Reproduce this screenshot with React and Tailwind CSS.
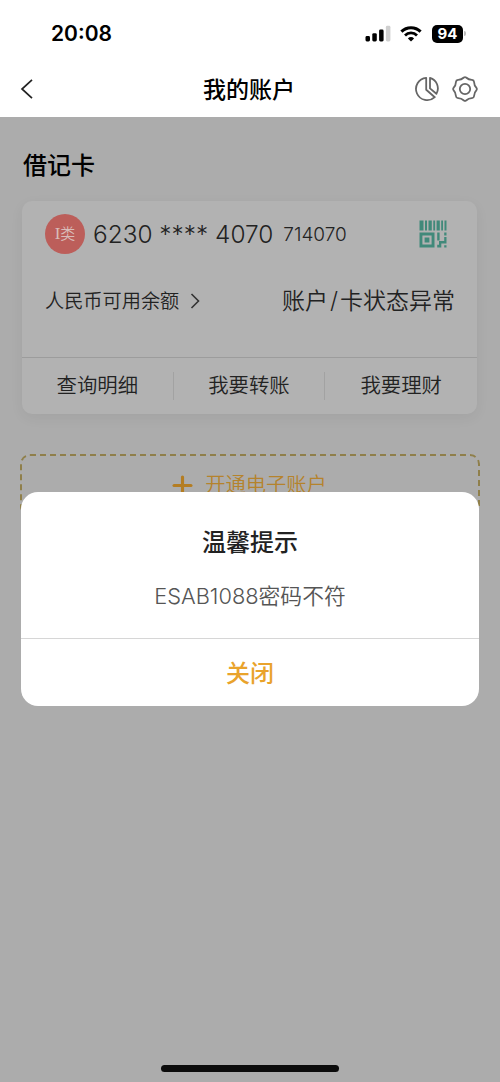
import { Plus } from 'lucide-react';

const actions = ['查询明细', '我要转账', '我要理财'];

const StatusBar = () => (
    <div className="flex h-[60px] items-center justify-between pt-[7px] pl-[51px] pr-[34px]">
        <span className="text-[21px] leading-none font-semibold text-black">20:08</span>
        <div className="flex items-center">
            <svg className="mr-[9px] h-[17px] w-[26px]" viewBox="0 0 26 17">
                <rect x="0.5" y="11" width="4.5" height="5.5" rx="1.4" />
                <rect x="7.3" y="8.2" width="4.5" height="8.3" rx="1.4" />
                <rect x="14.1" y="4.5" width="4.5" height="12" rx="1.4" />
                <rect x="20.9" y="0.8" width="4.5" height="15.7" rx="1.4" fill="#cfcfcf" />
            </svg>
            <svg className="mr-[10px] h-[16px] w-[22px]" viewBox="0 0 22 16" fill="none" stroke="black">
                <path d="M1.4 5.6a13.6 13.6 0 0 1 19.2 0" strokeWidth="3" />
                <path d="M5 9.4a8.5 8.5 0 0 1 12 0" strokeWidth="2.8" />
                <path d="M11 15.6l3.1-3.2a4.4 4.4 0 0 0-6.2 0z" fill="black" stroke="none" />
            </svg>
            <div className="flex h-[18px] w-[31px] items-center justify-center rounded-[5px] bg-black text-[15px] leading-none font-bold text-white">
                94
            </div>
            <div className="ml-px h-[5px] w-[2px] rounded-r-full bg-[#bbbbbb]"></div>
        </div>
    </div>
);

const NavBar = () => (
    <div className="grid h-[57px] grid-cols-3 items-center pr-[22px] pl-[20px]">
        <svg className="h-[22px] w-[14px]" viewBox="0 0 14 22" fill="none" stroke="#222222" strokeWidth="1.7">
            <path d="M12 1.8L2 11l10 9.2" />
        </svg>
        <h1 className="pt-[3px] text-center text-[23px] leading-none font-medium text-black">我的账户</h1>
        <div className="flex items-center justify-end gap-[12px]">
            <svg className="h-[26px] w-[26px]" viewBox="0 0 26 26" fill="none" stroke="#666666" strokeWidth="1.8" strokeLinejoin="round">
                <path d="M12.2 1.8A11.2 11.2 0 1 0 20.8 21.2L12.2 13.8z" />
                <path d="M16 1.8v10.6l6.4 5.4A11 11 0 0 0 16 1.8z" />
            </svg>
            <svg className="h-[26px] w-[26px]" viewBox="0 0 26 26" fill="none" stroke="#666666" strokeWidth="1.8" strokeLinejoin="round">
                <path d="M11.9 1.5Q13 0.8 14.1 1.5Q16.8 4 20 3.9Q21.9 4.1 22.1 6Q22 9.2 24.5 11.9Q25.2 13 24.5 14.1Q22 16.8 22.1 20Q21.9 21.9 20 22.1Q16.8 22 14.1 24.5Q13 25.2 11.9 24.5Q9.2 22 6 22.1Q4.1 21.9 3.9 20Q4 16.8 1.5 14.1Q0.8 13 1.5 11.9Q4 9.2 3.9 6Q4.1 4.1 6 3.9Q9.2 4 11.9 1.5z" />
                <circle cx="13" cy="13" r="5.2" />
            </svg>
        </div>
    </div>
);

const CodeIcon = () => (
    <svg className="h-[28px] w-[28px]" viewBox="0 0 28 28" fill="#41897a">
        <path d="M0.5 0.5h4v10h-4zM6 0.5h2v10H6zM9.5 0.5h3.3v10H9.5zM14.3 0.5h1.8v10h-1.8zM17.6 0.5h3.2v10h-3.2zM22.2 0.5h1.8v10h-1.8zM25.5 0.5h2v10h-2z" />
        <path fillRule="evenodd" d="M0.5 12.5h15v15H0.5zM3.4 15.4v9.2h9.2v-9.2z" />
        <path d="M5.6 17.6h4.8v4.8H5.6zM18.2 12.5h2.4v8h-2.4zM25.2 12.5h2.3v3h-2.3zM25.2 17h2.3v6.5h-5.2v4h-4.1v-2.8h1.8V21h5.2zM25.2 25.2h2.3v2.3h-2.3z" />
    </svg>
);

const AccountCard = () => (
    <section className="mr-[23px] ml-[22px] h-[213px] rounded-[10px] bg-[#b2b2b2] font-[350] text-[#222222] shadow-[0_4px_14px_rgba(0,0,0,0.05)]">
        <div className="flex h-[66px] items-center pr-[30px] pl-[23px]">
            <div className="flex h-[40px] w-[40px] items-center justify-center rounded-full bg-[#bc5e5a] text-[15px] text-[#d9bcb9]">
                <span className="font-['Liberation_Serif',serif] text-[17px]">I</span>类
            </div>
            <span className="ml-[8px] text-[24.4px] leading-none whitespace-nowrap">6230 **** 4070</span>
            <span className="ml-[10px] text-[19px] leading-none">714070</span>
            <div className="ml-auto">
                <CodeIcon />
            </div>
        </div>
        <div className="flex h-[90px] items-start justify-between pt-[20px] pr-[22px] pl-[23px]">
            <div className="flex h-[28px] items-center text-[19.2px]">
                人民币可用余额
                <svg className="ml-[11px] h-[16px] w-[10px]" viewBox="0 0 10 16" fill="none" stroke="#333333" strokeWidth="1.6">
                    <path d="M1.5 1l7 7-7 7" />
                </svg>
            </div>
            <div className="flex h-[28px] items-center text-[23px]">
                账户<span className="mx-[2px]">/</span>卡状态异常
            </div>
        </div>
        <div className="grid h-[57px] grid-cols-3 items-center divide-x divide-[#a2a2a2] border-t border-[#9c9c9c]">
            {actions.map((label) => (
                <div key={label} className="flex h-[28px] items-center justify-center text-[20.4px]">
                    {label}
                </div>
            ))}
        </div>
    </section>
);

const Dialog = () => (
    <div className="absolute top-[492px] left-[21px] flex h-[214px] w-[458px] flex-col rounded-[17px] bg-white text-center">
        <div className="flex-1 pt-[36px]">
            <h3 className="text-[24px] leading-[30px] font-medium text-[#222222]">温馨提示</h3>
            <p className="mt-[24px] text-[21.8px] leading-[28px] font-[350] text-[#555555]">ESAB1088密码不符</p>
        </div>
        <button className="h-[68px] border-t border-[#d6d6d6] pt-[3px] text-[24px] leading-none font-medium text-[#e9a32c]">关闭</button>
    </div>
);

export default function App() {
    return (
        <div className="relative flex h-[1082px] w-[500px] flex-col overflow-hidden bg-[#acacac] font-[Inter,'Noto_Sans_CJK_SC',sans-serif]">
            <header className="bg-white">
                <StatusBar />
                <NavBar />
            </header>
            <h2 className="mt-[34px] mb-[20px] pl-[23px] text-[24px] leading-[30px] font-medium text-black">借记卡</h2>
            <AccountCard />
            <div className="mx-[20px] mt-[40px] flex h-[62px] items-center justify-center gap-[8px] rounded-[10px] border-2 border-dashed border-[#8f7f4a] pr-[5px] text-[20.3px] font-[350] text-[#b5832c]">
                <Plus className="h-[29px] w-[29px] text-[#b47d22]" strokeWidth={2.6} />
                开通电子账户
            </div>
            <div className="mx-auto mt-auto mb-[10px] h-[7px] w-[178px] rounded-full bg-[#0c0c0c]"></div>
            <Dialog />
        </div>
    );
}
